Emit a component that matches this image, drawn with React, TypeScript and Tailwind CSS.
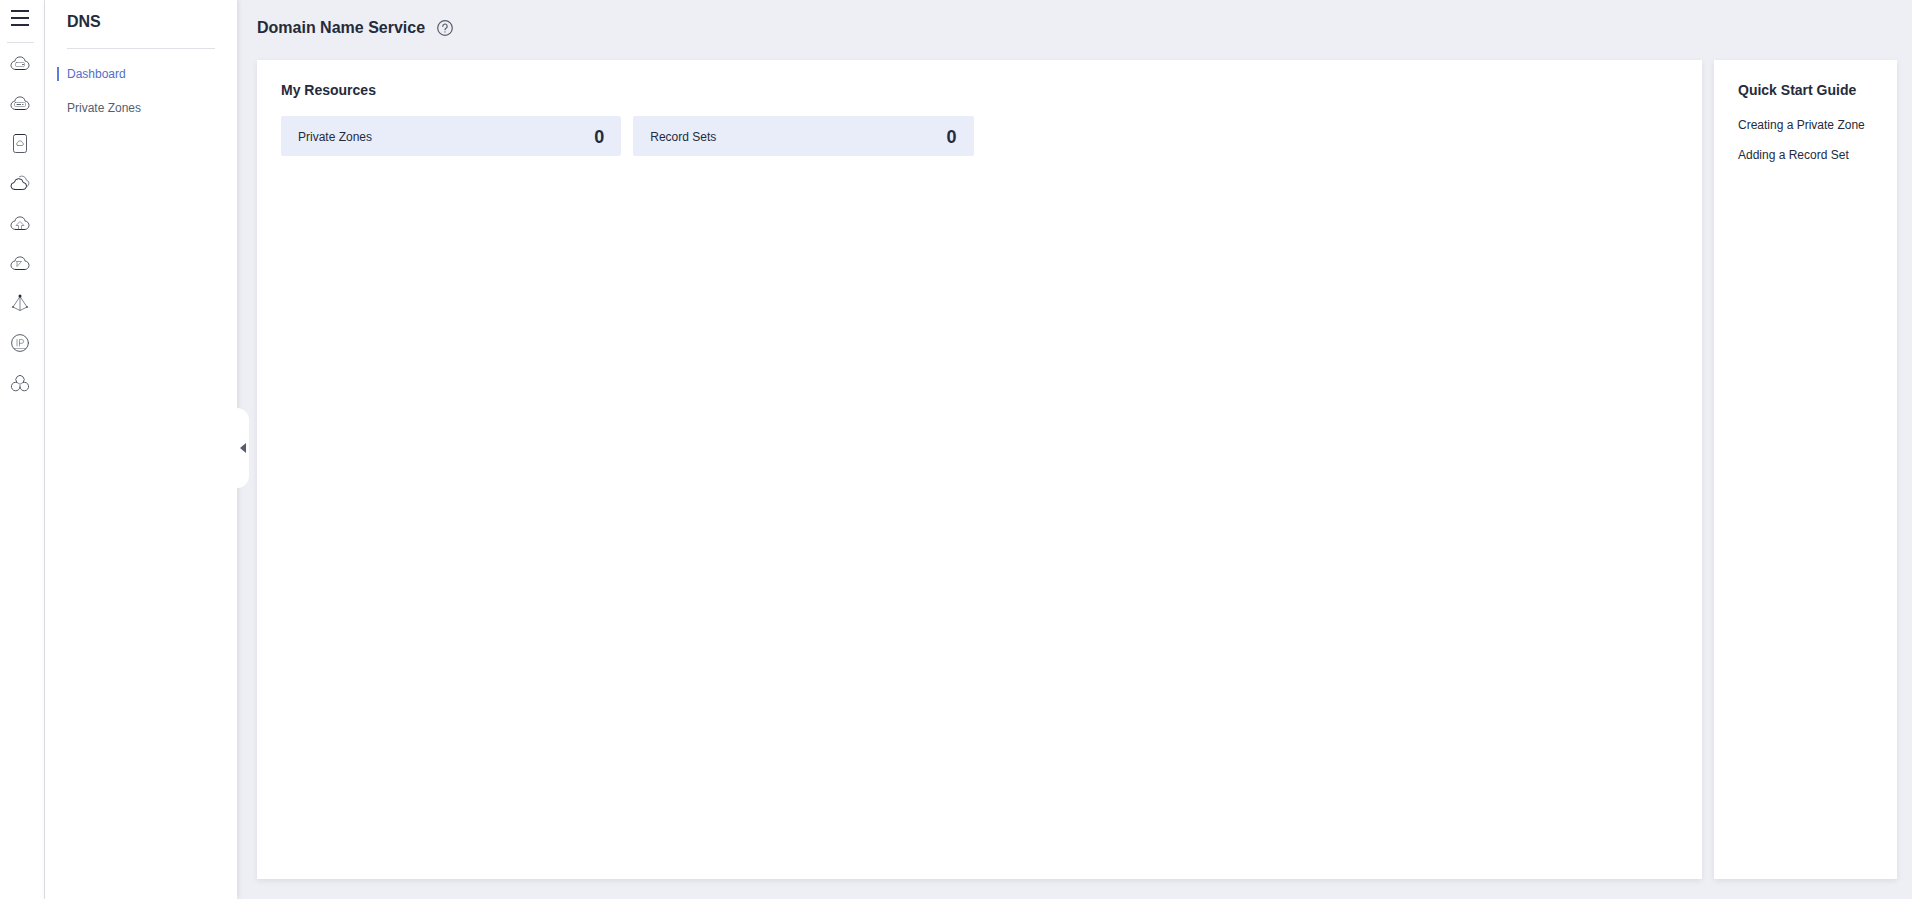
import React from "react";

interface IconProps {
  children: React.ReactNode;
}

function RailIcon({ children }: IconProps) {
  return (
    <svg
      width="20"
      height="20"
      viewBox="0 0 20 20"
      fill="none"
      stroke="#575d6c"
      strokeWidth="1"
      strokeLinecap="round"
      strokeLinejoin="round"
      aria-hidden="true"
    >
      {children}
    </svg>
  );
}

const CLOUD = "M5.5 16.5h9a4.2 4.2 0 0 0 .6-8.4A5.2 5.2 0 0 0 4.9 8.1a4.2 4.2 0 0 0 .6 8.4Z";

const RAIL_ITEMS = [
  {
    label: "Elastic Cloud Server",
    icon: (
      <>
        <path d={CLOUD} />
        <path d="M5.5 16.5h9" stroke="#252b3a" />
        <rect x="5.5" y="9.5" width="9" height="4" rx="1" strokeOpacity=".5" />
        <path d="M12.5 11.5h1" />
      </>
    ),
  },
  {
    label: "Bare Metal Server",
    icon: (
      <>
        <path d={CLOUD} />
        <path d="M5.5 16.5h9" stroke="#252b3a" />
        <rect x="4.5" y="9.5" width="11" height="4" rx="1" strokeOpacity=".5" />
        <path d="M7 11.5h3.500M12.500 11.500h.5" />
      </>
    ),
  },
  {
    label: "Elastic Volume Service",
    icon: (
      <>
        <rect x="3.5" y="1.500" width="13" height="18" rx="2" />
        <path d="M5.500 1.500h9" stroke="#252b3a" />
        <path d="M7.800 12.500h4.400a1.500 1.500 0 0 0 .2-2.900A2.500 2.500 0 0 0 7.600 9.600a1.500 1.500 0 0 0 .2 2.900Z" strokeOpacity=".65" />
      </>
    ),
  },
  {
    label: "Virtual Private Cloud",
    icon: (
      <>
        <path d="M9.500 3.600a4.500 4.500 0 0 1 6.800 3.500 3.400 3.400 0 0 1 .7 6.400" strokeOpacity=".75" />
        <path d="M4.700 16.500h8.100a3.500 3.500 0 0 0 .4-7A4.500 4.500 0 0 0 4.300 9.500a3.500 3.500 0 0 0 .4 7Z" stroke="#252b3a" />
      </>
    ),
  },
  {
    label: "Object Storage Service",
    icon: (
      <>
        <path d={CLOUD} />
        <path d="M5.500 16.500h9" stroke="#252b3a" />
        <path d="M8.500 16v-3.500H6L10 8.500l4 4h-2.500V16" strokeOpacity=".6" />
      </>
    ),
  },
  {
    label: "Content Delivery Network",
    icon: (
      <>
        <path d={CLOUD} />
        <path d="M5.500 16.500h9" stroke="#252b3a" />
        <path d="M6.500 8.500h5L7 13.500V9" strokeOpacity=".6" />
      </>
    ),
  },
  {
    label: "Elastic Load Balance",
    icon: (
      <>
        <path d="M10 3.500 3 14l7 3.500 7-3.500-7-10.500v14" strokeOpacity=".75" />
        <circle cx="10" cy="3" r="1.500" fill="#252b3a" stroke="none" />
        <circle cx="3" cy="14" r="1" fill="#575d6c" stroke="none" />
        <circle cx="17" cy="14" r="1" fill="#575d6c" stroke="none" />
      </>
    ),
  },
  {
    label: "Elastic IP",
    icon: (
      <>
        <circle cx="10" cy="10" r="8.400" />
        <path d="M4.500 15.500h11" strokeOpacity=".5" />
        <path d="M7 6.500v6.500M9.500 13V6.500h2.200a1.900 1.900 0 0 1 0 3.800H9.500" strokeOpacity=".6" />
      </>
    ),
  },
  {
    label: "Domain Name Service",
    icon: (
      <>
        <path d="M6.700 9.300a4.200 4.200 0 1 1 6.600 0" />
        <path d="M6.700 9.300a4.300 4.300 0 1 0 3.300 4.200 4.300 4.300 0 1 0 3.300-4.200" />
        <path d="M6.700 9.300A4.200 4.200 0 0 1 10 13.500a4.200 4.200 0 0 1 3.300-4.200M6.700 9.300a5 5 0 0 0 6.600 0" strokeOpacity=".4" />
      </>
    ),
  },
];

const NAV_ITEMS = [
  { label: "Dashboard", active: true },
  { label: "Private Zones", active: false },
];

const RESOURCES = [
  { label: "Private Zones", count: 0 },
  { label: "Record Sets", count: 0 },
];

const GUIDES = ["Creating a Private Zone", "Adding a Record Set"];

function Rail() {
  return (
    <nav aria-label="Services" className="w-[45px] shrink-0 border-r border-[#dfe1e6] pr-1 flex flex-col items-center">
      <button aria-label="All services" className="mt-[10px] h-4 w-[18px] flex flex-col justify-between">
        <span className="h-0.5 w-full bg-[#252b3a]" />
        <span className="h-0.5 w-full bg-[#252b3a]" />
        <span className="h-0.5 w-full bg-[#252b3a]" />
      </button>
      <div className="mt-4 h-px w-[27px] bg-[#dfe1e6]" />
      <div className="flex flex-col">
        {RAIL_ITEMS.map((item) => (
          <a key={item.label} href="#" aria-label={item.label} className="flex h-10 w-10 items-center justify-center">
            <RailIcon>{item.icon}</RailIcon>
          </a>
        ))}
      </div>
    </nav>
  );
}

function SideNav() {
  return (
    <aside className="relative z-10 w-48 shrink-0 bg-white shadow-[1px_0_5px_rgba(0,0,0,0.1)]">
      <div className="px-[22px] pt-[10px]">
        <h2 className="h-[39px] border-b border-[#dfe1e6] text-base font-bold">DNS</h2>
      </div>
      <ul className="mt-[11px] space-y-[6px]">
        {NAV_ITEMS.map((item) => (
          <li key={item.label} className="flex h-7 items-center pl-3">
            <span className={item.active ? "h-[14px] w-0.5 bg-[#5e7ce0]" : "h-[14px] w-0.5"} />
            <a href="#" className={item.active ? "pl-2 text-xs text-[#526ecc]" : "pl-2 text-xs text-[#575d6c]"}>
              {item.label}
            </a>
          </li>
        ))}
      </ul>
      {/* Collapse handle, hangs over the page edge */}
      <button
        aria-label="Collapse menu"
        className="absolute left-full top-1/2 -mt-[42px] flex h-20 w-3 items-center justify-center rounded-r-xl bg-white"
      >
        <svg width="6" height="10" viewBox="0 0 6 10" fill="#575d6c" aria-hidden="true">
          <path d="M6 0v10L0 5Z" />
        </svg>
      </button>
    </aside>
  );
}

export default function App() {
  return (
    <div className="flex min-h-screen bg-white font-['Liberation_Sans',Arial,sans-serif] text-[#252b3a]">
      <Rail />
      <SideNav />
      <main className="flex min-w-0 flex-1 flex-col bg-[#eeeff5] pb-5 pl-5 pr-[15px]">
        <header className="flex h-[60px] items-center gap-3 pb-1">
          <h1 className="text-base font-bold">Domain Name Service</h1>
          <button aria-label="Help">
            <svg width="16" height="16" viewBox="0 0 16 16" fill="none" stroke="#575d6c" strokeWidth="1.2" strokeLinecap="round">
              <circle cx="8" cy="8" r="7.300" />
              <path d="M5.800 6.300a2.200 2.200 0 1 1 3.500 1.700C8.400 8.600 8 8.900 8 9.700M8 11.800v.2" />
            </svg>
          </button>
        </header>
        <div className="flex flex-1 gap-3">
          <section className="min-w-0 flex-1 bg-white px-6 pt-5 shadow-[0_2px_6px_rgba(0,0,0,0.08)]">
            <h2 className="text-sm font-bold">My Resources</h2>
            <div className="mt-4 grid grid-cols-4 gap-3">
              {RESOURCES.map((r) => (
                <a
                  key={r.label}
                  href="#"
                  className="flex h-10 items-center justify-between rounded-[2px] bg-[#e9edfa] px-[17px] pt-0.5 text-xs"
                >
                  <span>{r.label}</span>
                  <span className="text-lg font-bold">{r.count}</span>
                </a>
              ))}
            </div>
          </section>
          <section className="w-[183px] shrink-0 bg-white px-6 pt-5 shadow-[0_2px_6px_rgba(0,0,0,0.08)]">
            <h2 className="text-sm font-bold">Quick Start Guide</h2>
            <ul className="mt-[10px]">
              {GUIDES.map((guide) => (
                <li key={guide} className="flex h-[30px] items-center">
                  <a href="#" className="whitespace-nowrap text-xs">{guide}</a>
                </li>
              ))}
            </ul>
          </section>
        </div>
      </main>
    </div>
  );
}
